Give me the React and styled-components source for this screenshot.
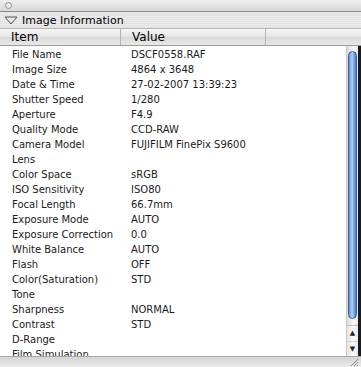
import styled, { createGlobalStyle } from "styled-components";

const GlobalStyle = createGlobalStyle`
  html, body {
    margin: 0;
    padding: 0;
    background: #fff;
  }
  body {
    font-family: "DejaVu Sans", "Liberation Sans", sans-serif;
  }
`;

const rows = [
  ["File Name", "DSCF0558.RAF"],
  ["Image Size", "4864 x 3648"],
  ["Date & Time", "27-02-2007 13:39:23"],
  ["Shutter Speed", "1/280"],
  ["Aperture", "F4.9"],
  ["Quality Mode", "CCD-RAW"],
  ["Camera Model", "FUJIFILM FinePix S9600"],
  ["Lens", ""],
  ["Color Space", "sRGB"],
  ["ISO Sensitivity", "ISO80"],
  ["Focal Length", "66.7mm"],
  ["Exposure Mode", "AUTO"],
  ["Exposure Correction", "0.0"],
  ["White Balance", "AUTO"],
  ["Flash", "OFF"],
  ["Color(Saturation)", "STD"],
  ["Tone", ""],
  ["Sharpness", "NORMAL"],
  ["Contrast", "STD"],
  ["D-Range", ""],
  ["Film Simulation", ""],
];

const App = () => {
  return (
    <>
      <GlobalStyle />
      <Window>
        <TitleBar>
          <Dot />
        </TitleBar>
        <SectionHeader>
          <svg width="14" height="10" viewBox="0 0 14 10">
            <path d="M1 2 L13 2 L7 9 Z" fill="#e8e8e8" stroke="#555" strokeWidth="1" />
          </svg>
          <span>Image Information</span>
        </SectionHeader>
        <ColumnHeader>
          <HeadCell $width={121}>Item</HeadCell>
          <HeadCell $width={145}>Value</HeadCell>
          <HeadCell $grow />
        </ColumnHeader>
        <Body>
          <List>
            {rows.map(([item, value]) => (
              <Row key={item}>
                <ItemCell>{item}</ItemCell>
                <ValueCell>{value}</ValueCell>
              </Row>
            ))}
          </List>
          <Scrollbar>
            <Track>
              <Thumb />
            </Track>
            <Arrows>
              <Arrow>▲</Arrow>
              <Arrow>▼</Arrow>
            </Arrows>
          </Scrollbar>
          <Edge />
        </Body>
        <BottomBar>
          <Grip>
            <svg width="10" height="10" viewBox="0 0 10 10">
              <path d="M9 2 L2 9 M9 5 L5 9 M9 8 L8 9" stroke="#888" strokeWidth="1" />
            </svg>
          </Grip>
        </BottomBar>
      </Window>
    </>
  );
};

export default App;

const Window = styled.div`
  width: 361px;
  height: 367px;
  display: flex;
  flex-direction: column;
  overflow: hidden;
  background: #fff;
`;

const TitleBar = styled.div`
  height: 11px;
  flex: none;
  display: flex;
  align-items: center;
  padding-left: 5px;
  background: linear-gradient(#f0f0f0, #d8d8d8);
  border-bottom: 1px solid #8a8a8a;
`;

const Dot = styled.div`
  width: 5px;
  height: 5px;
  border-radius: 50%;
  border: 1px solid #8c8c8c;
  background: #ececec;
`;

const SectionHeader = styled.div`
  height: 16px;
  flex: none;
  display: flex;
  align-items: center;
  gap: 4px;
  padding-left: 4px;
  font-size: 11px;
  color: #000;
  background: repeating-linear-gradient(#ebebeb 0 1px, #e2e2e2 1px 2px);
  border-bottom: 1px solid #b8b8b8;
`;

const ColumnHeader = styled.div`
  height: 16px;
  flex: none;
  display: flex;
  background: linear-gradient(#f6f6f6, #e4e4e4 50%, #dadada 51%, #e8e8e8);
  border-bottom: 1px solid #9c9c9c;
`;

const HeadCell = styled.div`
  width: ${(p) => (p.$width ? `${p.$width}px` : "auto")};
  flex: ${(p) => (p.$grow ? 1 : "none")};
  box-sizing: border-box;
  padding-left: 11px;
  font-size: 12px;
  line-height: 16px;
  color: #000;
  border-right: ${(p) => (p.$grow ? "none" : "1px solid #b4b4b4")};
`;

const Body = styled.div`
  flex: 1;
  display: flex;
  min-height: 0;
`;

const List = styled.div`
  flex: 1;
  overflow: hidden;
  padding-top: 1px;
`;

const Row = styled.div`
  height: 15px;
  display: flex;
  align-items: center;
  font-size: 10px;
  color: #1a1a1a;
`;

const ItemCell = styled.div`
  width: 131px;
  flex: none;
  padding-left: 12px;
  box-sizing: border-box;
  white-space: nowrap;
`;

const ValueCell = styled.div`
  white-space: nowrap;
`;

const Scrollbar = styled.div`
  width: 11px;
  flex: none;
  display: flex;
  flex-direction: column;
  background: #f2f2f2;
  border-left: 1px solid #c8c8c8;
`;

const Track = styled.div`
  flex: 1;
  padding: 5px 0 6px;
  display: flex;
  flex-direction: column;
  background: linear-gradient(90deg, #dcdcdc, #f8f8f8 60%, #e6e6e6);
`;

const Thumb = styled.div`
  flex: 1;
  margin: 0 1px;
  border-radius: 5px;
  border: 1px solid #3a5f9e;
  background: linear-gradient(90deg, #5f8fd6, #b6d0f4 45%, #7aa7e6 70%, #4b7cc8);
`;

const Arrows = styled.div`
  height: 30px;
  display: flex;
  flex-direction: column;
  border-top: 1px solid #c0c0c0;
  background: linear-gradient(90deg, #e4e4e4, #fafafa 60%, #e8e8e8);
`;

const Arrow = styled.div`
  flex: 1;
  font-size: 7px;
  line-height: 15px;
  text-align: center;
  color: #222;
  & + & {
    border-top: 1px solid #d0d0d0;
  }
`;

const Edge = styled.div`
  width: 3px;
  flex: none;
  background: #1a1a1a;
`;

const BottomBar = styled.div`
  height: 10px;
  flex: none;
  display: flex;
  justify-content: flex-end;
  background: linear-gradient(#d4d4d4, #ececec);
  border-top: 1px solid #a8a8a8;
`;

const Grip = styled.div`
  width: 14px;
  display: flex;
  align-items: center;
  justify-content: center;
`;
